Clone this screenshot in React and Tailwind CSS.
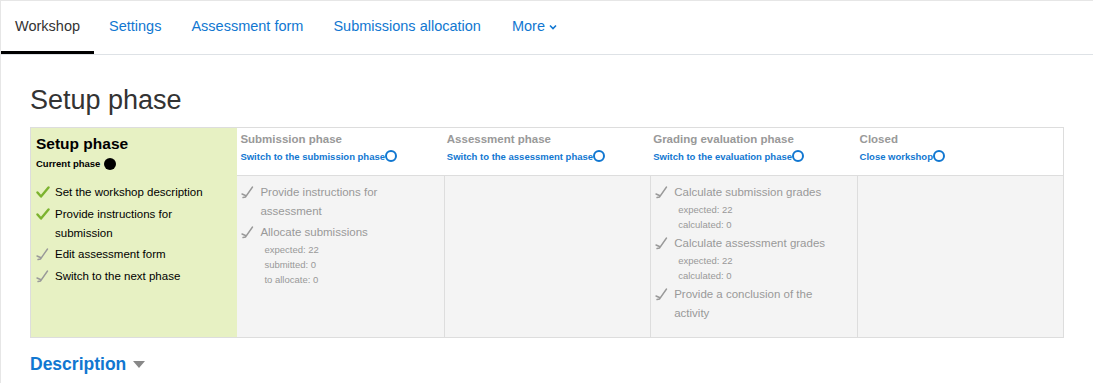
import React from 'react';

const tabs = ['Workshop', 'Settings', 'Assessment form', 'Submissions allocation'];

const GreenCheck = () => (
  <svg width="14" height="13" viewBox="0 0 14 13" className="shrink-0 mt-[3px]">
    <path d="M1.5 6.5 L5 10.5 L12.5 1.5" fill="none" stroke="#7cb32f" strokeWidth="2.4" strokeLinecap="round" strokeLinejoin="round" />
  </svg>
);

const GreyCheck = () => (
  <svg width="14" height="13" viewBox="0 0 14 13" className="shrink-0 mt-[3px]">
    <path d="M1 8 L4.5 9.5 M2 11.5 L4.5 11 L11.5 1" fill="none" stroke="#999" strokeWidth="1.4" strokeLinecap="round" strokeLinejoin="round" />
  </svg>
);

const Ring = () => (
  <span className="inline-block w-[12px] h-[12px] rounded-full border-2 border-[#1177d1] align-[-2px]" />
);

const phases = [
  {
    title: 'Submission phase',
    link: 'Switch to the submission phase',
    tasks: [
      { text: 'Provide instructions for assessment' },
      { text: 'Allocate submissions', info: ['expected: 22', 'submitted: 0', 'to allocate: 0'] },
    ],
  },
  { title: 'Assessment phase', link: 'Switch to the assessment phase', tasks: [] },
  {
    title: 'Grading evaluation phase',
    link: 'Switch to the evaluation phase',
    tasks: [
      { text: 'Calculate submission grades', info: ['expected: 22', 'calculated: 0'] },
      { text: 'Calculate assessment grades', info: ['expected: 22', 'calculated: 0'] },
      { text: 'Provide a conclusion of the activity' },
    ],
  },
  { title: 'Closed', link: 'Close workshop', tasks: [] },
];

const setupTasks = [
  { text: 'Set the workshop description', done: true },
  { text: 'Provide instructions for submission', done: true },
  { text: 'Edit assessment form', done: false },
  { text: 'Switch to the next phase', done: false },
];

export default function App() {
  return (
    <div className="min-h-screen bg-white border-l border-t border-[#e6e6e6] font-['Liberation_Sans',Arial,sans-serif]">
      {/* secondary navigation */}
      <nav className="flex border-b border-[#dee2e6] h-[54px]">
        {tabs.map((t, i) => (
          <a
            key={t}
            className={
              i === 0
                ? 'px-[14px] flex items-center text-[14.5px] text-[#333] border-b-[3px] border-black pt-[1px]'
                : 'px-[15px] flex items-center text-[14.5px] text-[#1177d1] pb-[2px]'
            }
          >
            {t}
          </a>
        ))}
        <a className="px-[16px] flex items-center text-[14.5px] text-[#1177d1] gap-[4px] pb-[2px]">
          More
          <svg width="8" height="6" viewBox="0 0 8 6">
            <path d="M1 1.5 L4 4.5 L7 1.5" fill="none" stroke="#1177d1" strokeWidth="1.6" />
          </svg>
        </a>
      </nav>

      <div className="px-[29px]">
        <h2 className="mt-[28px] mb-[10px] text-[27px] leading-[34px] text-[#333]">Setup phase</h2>

        <div className="grid grid-cols-5 grid-rows-[48px_auto] border border-[#ddd]">
          {/* current phase */}
          <div className="row-span-2 bg-[#e7f1c3] pl-[5px] pr-[14px] pt-[6px] pb-[4px]">
            <h3 className="text-[15.5px] font-bold leading-[20px] text-black">Setup phase</h3>
            <div className="flex items-center gap-[4px] text-[9.5px] font-bold text-black mt-[3px]">
              Current phase
              <span className="inline-block w-[12px] h-[12px] rounded-full bg-black" />
            </div>
            <ul className="mt-[12px] flex flex-col gap-[2.5px]">
              {setupTasks.map((t) => (
                <li key={t.text} className="flex gap-[5px] text-[11.5px] leading-[19px] text-black">
                  {t.done ? <GreenCheck /> : <GreyCheck />}
                  <span>{t.text}</span>
                </li>
              ))}
            </ul>
          </div>

          {/* other phase headers */}
          {phases.map((p) => (
            <div key={p.title} className="bg-white border-b border-[#ddd] pl-[3px] pt-[4px]">
              <h3 className="text-[11.5px] font-bold leading-[15px] text-[#999]">{p.title}</h3>
              <a className="block mt-[3px] text-[9.5px] font-bold leading-[13px] text-[#1177d1]">
                {p.link}
                <Ring />
              </a>
            </div>
          ))}

          {/* phase tasks */}
          {phases.map((p, i) => (
            <div
              key={p.title + '-tasks'}
              className={
                i === 0
                  ? 'bg-[#f4f4f4] pl-[4px] pr-[6px] pt-[7px] pb-[14px]'
                  : 'bg-[#f4f4f4] border-l border-[#ddd] pl-[4px] pr-[6px] pt-[7px] pb-[14px]'
              }
            >
              <ul className="flex flex-col gap-[2px]">
                {p.tasks.map((t) => (
                  <li key={t.text} className="flex gap-[5px] text-[11.5px] leading-[19px] text-[#999]">
                    <GreyCheck />
                    <div>
                      <div>{t.text}</div>
                      {t.info && (
                        <div className="pl-[4px]">
                          {t.info.map((x) => (
                            <div key={x} className="text-[9.5px] leading-[15px] text-[#999]">{x}</div>
                          ))}
                        </div>
                      )}
                    </div>
                  </li>
                ))}
              </ul>
            </div>
          ))}
        </div>

        <h3 className="mt-[15px] flex items-center gap-[7px] text-[17.5px] font-bold text-[#1177d1] leading-[22px]">
          Description
          <svg width="12" height="7" viewBox="0 0 12 7">
            <path d="M0 0 L12 0 L6 7 Z" fill="#888" />
          </svg>
        </h3>
      </div>
    </div>
  );
}
